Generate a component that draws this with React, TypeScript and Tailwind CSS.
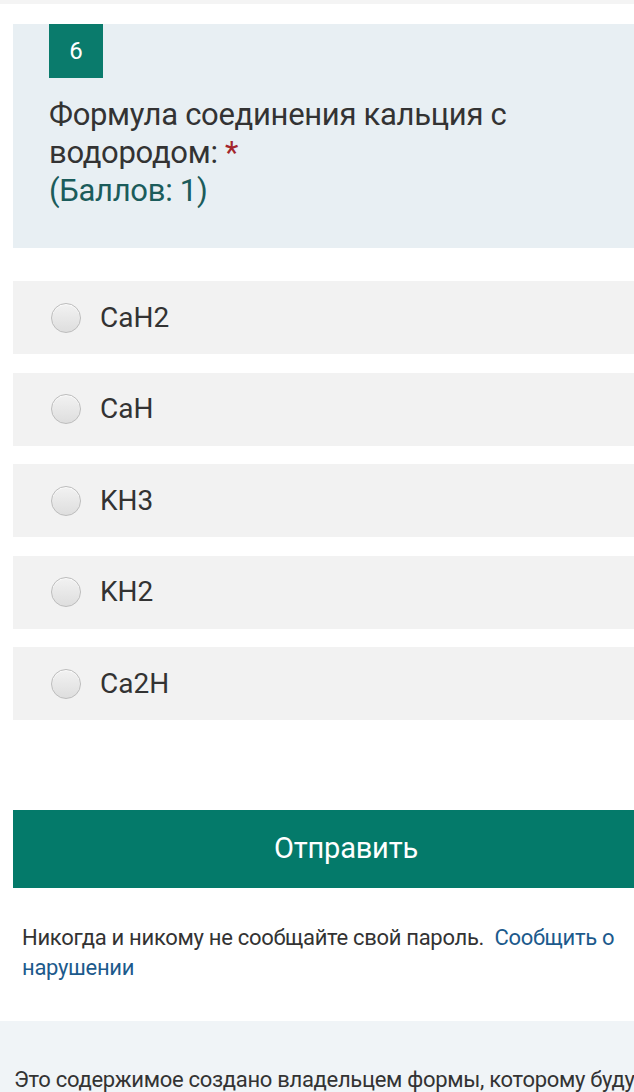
const options = ['CaH2', 'CaH', 'KH3', 'KH2', 'Ca2H'];

function Radio() {
  return (
    <span className="block h-[30px] w-[30px] shrink-0 rounded-full border border-[#bdbdbd] bg-gradient-to-b from-[#f2f2f2] to-[#dedede] shadow-[inset_0_1px_1px_rgba(255,255,255,0.8)]" />
  );
}

export default function App() {
  return (
    <div
      className="w-[634px] h-[1092px] overflow-hidden bg-white text-[#333333]"
      style={{ fontFamily: 'Roboto, "Noto Sans", sans-serif' }}
    >
      <div className="w-[692px]">
        <div className="h-[4px] bg-[#f4f4f4]" />
        <div className="px-[13px] pt-[20px]">
          {/* вопрос */}
          <div className="bg-[#e8eff3] pl-[36px] pr-4 pb-[38px]">
            <div className="flex h-[54px] w-[54px] items-center justify-center bg-[#0a7b6c] text-[24px] text-white">
              6
            </div>
            <div className="mt-[18px] w-[540px] text-[31px] leading-[38px] tracking-[-0.3px] text-[#333333]">
              Формула соединения кальция с водородом: <span className="text-[#a4262c]">*</span>
              <div className="text-[#1b5c5b]">(Баллов: 1)</div>
            </div>
          </div>

          {/* варианты */}
          <div className="mt-[33px] flex flex-col gap-[18.5px]">
            {options.map((o) => (
              <label key={o} className="flex h-[73px] items-center gap-[19px] bg-[#f2f2f2] pl-[38px]">
                <Radio />
                <span className="text-[28px] text-[#333333]">{o}</span>
              </label>
            ))}
          </div>

          <button className="mt-[90px] flex h-[78px] w-full items-center justify-center bg-[#047a6a] text-[29px] tracking-[-0.2px] text-white">
            Отправить
          </button>

          <p className="mt-[35px] w-[634px] px-[9px] text-[22px] leading-[30px] tracking-[-0.3px] text-[#333333]">
            Никогда и никому не сообщайте свой пароль.{'\u00a0 '}
            <a className="text-[#1c5a8c]">Сообщить о нарушении</a>
          </p>
        </div>

        <div className="mt-[38px] h-[200px] bg-[#f0f4f7] px-[14px] pt-[44px]">
          <p className="whitespace-nowrap text-[22px] leading-[30px] tracking-[-0.3px] text-[#333333]">
            Это содержимое создано владельцем формы, которому будут отправлены ваши данные.
          </p>
        </div>
      </div>
    </div>
  );
}
